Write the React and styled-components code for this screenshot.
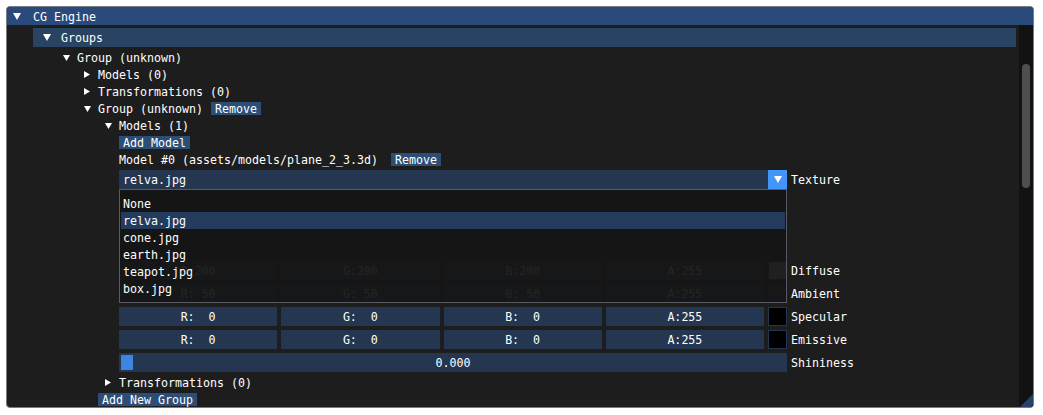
import styled, { createGlobalStyle } from "styled-components"

const GlobalStyle = createGlobalStyle`
    * { box-sizing: border-box; }
    body {
        margin: 0;
        background: #ffffff;
        color: #ffffff;
        font-family: "DejaVu Sans Mono", "Liberation Mono", monospace;
        font-size: 11.63px;
    }
`

const Page = styled.div`
    padding: 6px;
`

const Window = styled.div`
    position: relative;
    width: 1028px;
    height: 402px;
    display: flex;
    flex-direction: column;
    background: #1d1d1d;
    border: 1px solid #7a7a84;
    border-radius: 4px;
    overflow: hidden;
`

const TitleBar = styled.div`
    flex: none;
    height: 18px;
    line-height: 20px;
    display: flex;
    align-items: flex-start;
    padding-left: 6px;
    background: #294a7a;
`

const Body = styled.div`
    flex: 1;
    min-height: 0;
    display: flex;
`

const Content = styled.div`
    flex: 1;
    display: flex;
    flex-direction: column;
    gap: 4px;
    padding: 3px 3px 0 26px;
    overflow: hidden;
`

const Scrollbar = styled.div`
    flex: none;
    width: 14px;
    background: #121212;
    padding: 39px 3px 0 3px;
`

const ScrollGrab = styled.div`
    width: 8px;
    height: 124px;
    border-radius: 4px;
    background: #4f4f4f;
`

const Header = styled.div`
    flex: none;
    height: 19px;
    line-height: 21px;
    display: flex;
    align-items: flex-start;
    padding-left: 10px;
    background: #294362;
`

const ArrowCell = styled.span`
    flex: none;
    width: ${p => p.$w}px;
    height: ${p => p.$h}px;
    display: flex;
    align-items: center;
`

const Row = styled.div`
    flex: none;
    position: relative;
    display: flex;
    align-items: flex-start;
    height: ${p => p.$h || 13}px;
    line-height: ${p => (p.$h || 13) + 2}px;
    padding-left: ${p => p.$indent}px;
    white-space: pre;
`

const SmallButton = styled.span`
    display: inline-block;
    height: 13px;
    line-height: 15px;
    padding: 0 4px;
    margin-left: ${p => p.$gap || 0}px;
    background: #2c4e76;
`

const Combo = styled.div`
    width: 668px;
    height: 19px;
    display: flex;
    align-items: flex-start;
    background: #243650;
    padding-left: 4px;
`

const ComboText = styled.span`
    flex: 1;
    line-height: 21px;
`

const ComboArrow = styled.span`
    width: 19px;
    height: 19px;
    display: flex;
    align-items: center;
    justify-content: center;
    background: #4296fa;
`

const Label = styled.span`
    margin-left: 4px;
`

const Popup = styled.div`
    position: absolute;
    top: 19px;
    left: ${p => p.$left}px;
    width: 668px;
    height: 114px;
    z-index: 2;
    padding: 5px 1px;
    background: rgba(21, 21, 21, 0.94);
    border: 1px solid #5a5a64;
`

const PopupItem = styled.div`
    height: 17px;
    line-height: 19px;
    padding-left: 2px;
    background: ${p => (p.$selected ? "#233b5c" : "transparent")};
`

const Spacer = styled.div`
    flex: none;
    height: ${p => p.$h}px;
`

const Fields = styled.div`
    width: 668px;
    display: flex;
    gap: 4px;
`

const Field = styled.div`
    flex: 1;
    height: 19px;
    line-height: 21px;
    text-align: center;
    white-space: pre;
    background: #243650;
`

const Swatch = styled.div`
    flex: none;
    width: 19px;
    height: 19px;
    background: ${p => p.$color};
    border: 1px solid #243650;
`

const Slider = styled.div`
    position: relative;
    width: 668px;
    height: 19px;
    line-height: 21px;
    text-align: center;
    background: #243650;
`

const SliderGrab = styled.span`
    position: absolute;
    left: 2px;
    top: 2px;
    width: 12px;
    height: 15px;
    background: #3d85e0;
`

const ResizeGrip = styled.svg`
    position: absolute;
    right: 0;
    bottom: 0;
`

function Tri({ dir, w, h }) {
    const pts = dir === "down" ? `0,0 ${w},0 ${w / 2},${h}` : `0,0 ${w},${h / 2} 0,${h}`
    return (
        <svg width={w} height={h} viewBox={`0 0 ${w} ${h}`}>
            <polygon points={pts} fill="#ffffff" />
        </svg>
    )
}

function TreeNode({ indent, open, children }) {
    return (
        <Row $indent={indent}>
            <ArrowCell $w={14} $h={13}>
                {open ? <Tri dir="down" w={7} h={6} /> : <Tri dir="right" w={6} h={7} />}
            </ArrowCell>
            {children}
        </Row>
    )
}

const textures = ["None", "relva.jpg", "cone.jpg", "earth.jpg", "teapot.jpg", "box.jpg"]

const colors = [
    { label: "Diffuse", v: [200, 200, 200, 255] },
    { label: "Ambient", v: [50, 50, 50, 255] },
    { label: "Specular", v: [0, 0, 0, 255] },
    { label: "Emissive", v: [0, 0, 0, 255] },
]

function pad(n) {
    return String(n).padStart(3, " ")
}

export default function App() {
    return (
        <Page>
            <GlobalStyle />
            <Window>
                <TitleBar>
                    <ArrowCell $w={20} $h={18}>
                        <Tri dir="down" w={8} h={7} />
                    </ArrowCell>
                    CG Engine
                </TitleBar>
                <Body>
                    <Content>
                        <Header>
                            <ArrowCell $w={18} $h={19}>
                                <Tri dir="down" w={8} h={7} />
                            </ArrowCell>
                            Groups
                        </Header>
                        <TreeNode indent={30} open>Group (unknown)</TreeNode>
                        <TreeNode indent={51}>Models (0)</TreeNode>
                        <TreeNode indent={51}>Transformations (0)</TreeNode>
                        <TreeNode indent={51} open>
                            Group (unknown)<SmallButton $gap={8}>Remove</SmallButton>
                        </TreeNode>
                        <TreeNode indent={72} open>Models (1)</TreeNode>
                        <Row $indent={86}>
                            <SmallButton>Add Model</SmallButton>
                        </Row>
                        <Row $indent={86}>
                            Model #0 (assets/models/plane_2_3.3d)<SmallButton $gap={13}>Remove</SmallButton>
                        </Row>
                        <Row $indent={86} $h={19}>
                            <Combo>
                                <ComboText>relva.jpg</ComboText>
                                <ComboArrow>
                                    <Tri dir="down" w={8} h={7} />
                                </ComboArrow>
                            </Combo>
                            <Label>Texture</Label>
                            <Popup $left={86}>
                                {textures.map(t => (
                                    <PopupItem key={t} $selected={t === "relva.jpg"}>{t}</PopupItem>
                                ))}
                            </Popup>
                        </Row>
                        <Spacer $h={64} />
                        {colors.map(c => (
                            <Row key={c.label} $indent={86} $h={19}>
                                <Fields>
                                    <Field>R:{pad(c.v[0])}</Field>
                                    <Field>G:{pad(c.v[1])}</Field>
                                    <Field>B:{pad(c.v[2])}</Field>
                                    <Field>A:{pad(c.v[3])}</Field>
                                    <Swatch $color={`rgb(${c.v[0]}, ${c.v[1]}, ${c.v[2]})`} />
                                </Fields>
                                <Label>{c.label}</Label>
                            </Row>
                        ))}
                        <Row $indent={86} $h={19}>
                            <Slider>
                                <SliderGrab />
                                0.000
                            </Slider>
                            <Label>Shininess</Label>
                        </Row>
                        <TreeNode indent={72}>Transformations (0)</TreeNode>
                        <Row $indent={65}>
                            <SmallButton>Add New Group</SmallButton>
                        </Row>
                    </Content>
                    <Scrollbar>
                        <ScrollGrab />
                    </Scrollbar>
                </Body>
                <ResizeGrip width="13" height="13" viewBox="0 0 13 13">
                    <polygon points="13,0 13,13 0,13" fill="#26426a" />
                </ResizeGrip>
            </Window>
        </Page>
    )
}
